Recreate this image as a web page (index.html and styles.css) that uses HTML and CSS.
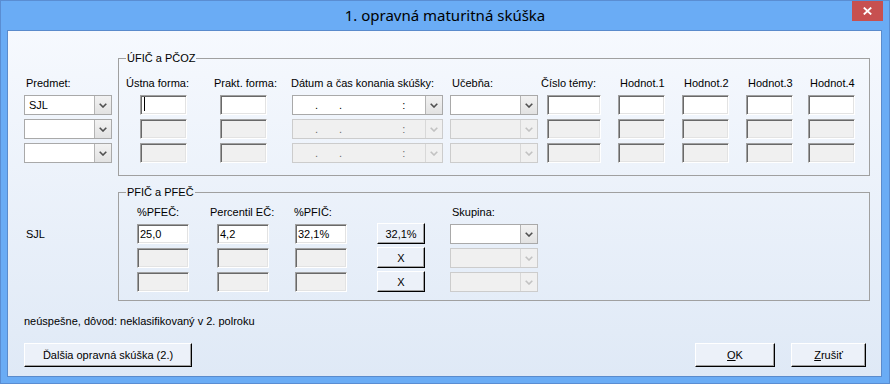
FILE: index.html
```html
<!DOCTYPE html>
<html lang="sk">
<head>
<meta charset="utf-8">
<title>1. opravná maturitná skúška</title>
<link rel="stylesheet" href="styles.css">
</head>
<body>
<div class="window">
  <div class="titlebar">
    <div class="tb-spacer"></div>
    <div class="title">1. opravná maturitná skúška</div>
    <div class="close"><svg width="9" height="8" viewBox="0 0 9 8"><path d="M0.8 0.6 L8.2 7.4 M8.2 0.6 L0.8 7.4" stroke="#fff" stroke-width="1.9" fill="none"/></svg></div>
  </div>
  <div class="client">
    <div class="section s1">
      <div class="leftcol lc1">
        <div class="lbl">Predmet:</div>
        <div class="stack">
          <div class="combo w88"><span class="val">SJL</span><span class="drop"><svg width="8" height="5" viewBox="0 0 8 5"><path d="M0.7 0.7 L4 4 L7.3 0.7" fill="none" stroke-width="1.6"/></svg></span></div>
          <div class="combo w88"><span class="val"></span><span class="drop"><svg width="8" height="5" viewBox="0 0 8 5"><path d="M0.7 0.7 L4 4 L7.3 0.7" fill="none" stroke-width="1.6"/></svg></span></div>
          <div class="combo w88"><span class="val"></span><span class="drop"><svg width="8" height="5" viewBox="0 0 8 5"><path d="M0.7 0.7 L4 4 L7.3 0.7" fill="none" stroke-width="1.6"/></svg></span></div>
        </div>
      </div>
      <fieldset class="group g1">
        <legend>ÚFIČ a PČOZ</legend>
        <div class="cols">
          <div class="col w-ustna">
            <div class="lbl">Ústna forma:</div>
            <div class="stack off14">
              <div class="tb w47"><span class="caret"></span></div>
              <div class="tb w47 dis"></div>
              <div class="tb w47 dis"></div>
            </div>
          </div>
          <div class="col w-prakt">
            <div class="lbl">Prakt. forma:</div>
            <div class="stack off6">
              <div class="tb w47"></div>
              <div class="tb w47 dis"></div>
              <div class="tb w47 dis"></div>
            </div>
          </div>
          <div class="col w-datum">
            <div class="lbl">Dátum a čas konania skúšky:</div>
            <div class="stack off1">
              <div class="combo w151"><span class="val dt"><span class="d1">.</span><span class="d2">.</span><span class="d3">:</span></span><span class="drop"><svg width="8" height="5" viewBox="0 0 8 5"><path d="M0.7 0.7 L4 4 L7.3 0.7" fill="none" stroke-width="1.6"/></svg></span></div>
              <div class="combo w151 dis"><span class="val dt"><span class="d1">.</span><span class="d2">.</span><span class="d3">:</span></span><span class="drop"><svg width="8" height="5" viewBox="0 0 8 5"><path d="M0.7 0.7 L4 4 L7.3 0.7" fill="none" stroke-width="1.6"/></svg></span></div>
              <div class="combo w151 dis"><span class="val dt"><span class="d1">.</span><span class="d2">.</span><span class="d3">:</span></span><span class="drop"><svg width="8" height="5" viewBox="0 0 8 5"><path d="M0.7 0.7 L4 4 L7.3 0.7" fill="none" stroke-width="1.6"/></svg></span></div>
            </div>
          </div>
          <div class="col w-ucebna">
            <div class="lbl loff2">Učebňa:</div>
            <div class="stack">
              <div class="combo w88"><span class="val"></span><span class="drop"><svg width="8" height="5" viewBox="0 0 8 5"><path d="M0.7 0.7 L4 4 L7.3 0.7" fill="none" stroke-width="1.6"/></svg></span></div>
              <div class="combo w88 dis"><span class="val"></span><span class="drop"><svg width="8" height="5" viewBox="0 0 8 5"><path d="M0.7 0.7 L4 4 L7.3 0.7" fill="none" stroke-width="1.6"/></svg></span></div>
              <div class="combo w88 dis"><span class="val"></span><span class="drop"><svg width="8" height="5" viewBox="0 0 8 5"><path d="M0.7 0.7 L4 4 L7.3 0.7" fill="none" stroke-width="1.6"/></svg></span></div>
            </div>
          </div>
          <div class="col w-cislo">
            <div class="lbl">Číslo témy:</div>
            <div class="stack off6">
              <div class="tb w54"></div>
              <div class="tb w54 dis"></div>
              <div class="tb w54 dis"></div>
            </div>
          </div>
          <div class="col w-h">
            <div class="lbl loff2">Hodnot.1</div>
            <div class="stack">
              <div class="tb w47"></div>
              <div class="tb w47 dis"></div>
              <div class="tb w47 dis"></div>
            </div>
          </div>
          <div class="col w-h">
            <div class="lbl loff2">Hodnot.2</div>
            <div class="stack">
              <div class="tb w47"></div>
              <div class="tb w47 dis"></div>
              <div class="tb w47 dis"></div>
            </div>
          </div>
          <div class="col w-h3">
            <div class="lbl loff2">Hodnot.3</div>
            <div class="stack">
              <div class="tb w47"></div>
              <div class="tb w47 dis"></div>
              <div class="tb w47 dis"></div>
            </div>
          </div>
          <div class="col w-h4">
            <div class="lbl loff2">Hodnot.4</div>
            <div class="stack">
              <div class="tb w47"></div>
              <div class="tb w47 dis"></div>
              <div class="tb w47 dis"></div>
            </div>
          </div>
        </div>
      </fieldset>
    </div>

    <div class="section s2">
      <div class="leftcol lc2">
        <div class="lbl">SJL</div>
      </div>
      <fieldset class="group g2">
        <legend>PFIČ a PFEČ</legend>
        <div class="cols">
          <div class="col w-pfec">
            <div class="lbl">%PFEČ:</div>
            <div class="stack">
              <div class="tb w52">25,0</div>
              <div class="tb w52 dis"></div>
              <div class="tb w52 dis"></div>
            </div>
          </div>
          <div class="col w-perc">
            <div class="lbl">Percentil EČ:</div>
            <div class="stack off7">
              <div class="tb w52">4,2</div>
              <div class="tb w52 dis"></div>
              <div class="tb w52 dis"></div>
            </div>
          </div>
          <div class="col w-pfic">
            <div class="lbl">%PFIČ:</div>
            <div class="stack off1">
              <div class="tb w52">32,1%</div>
              <div class="tb w52 dis"></div>
              <div class="tb w52 dis"></div>
            </div>
          </div>
          <div class="col w-btns">
            <div class="lbl"></div>
            <div class="stack btnstack">
              <button class="btn small">32,1%</button>
              <button class="btn small">X</button>
              <button class="btn small">X</button>
            </div>
          </div>
          <div class="col w-skup">
            <div class="lbl loff2">Skupina:</div>
            <div class="stack">
              <div class="combo w88"><span class="val"></span><span class="drop"><svg width="8" height="5" viewBox="0 0 8 5"><path d="M0.7 0.7 L4 4 L7.3 0.7" fill="none" stroke-width="1.6"/></svg></span></div>
              <div class="combo w88 dis"><span class="val"></span><span class="drop"><svg width="8" height="5" viewBox="0 0 8 5"><path d="M0.7 0.7 L4 4 L7.3 0.7" fill="none" stroke-width="1.6"/></svg></span></div>
              <div class="combo w88 dis"><span class="val"></span><span class="drop"><svg width="8" height="5" viewBox="0 0 8 5"><path d="M0.7 0.7 L4 4 L7.3 0.7" fill="none" stroke-width="1.6"/></svg></span></div>
            </div>
          </div>
        </div>
      </fieldset>
    </div>

    <div class="status">neúspešne, dôvod: neklasifikovaný v 2. polroku</div>

    <div class="btnrow">
      <button class="btn big">Ďalšia opravná skúška (2.)</button>
      <div class="btngroup">
        <button class="btn ok"><u>O</u>K</button>
        <button class="btn cancel"><u>Z</u>rušiť</button>
      </div>
    </div>
  </div>
</div>
</body>
</html>
```

FILE: styles.css
```css
* { box-sizing: border-box; }
html, body { margin: 0; padding: 0; }
body {
  width: 890px;
  height: 384px;
  overflow: hidden;
  font-family: "Liberation Sans", Arial, sans-serif;
  font-size: 11px;
  color: #000;
}
.window {
  width: 890px;
  height: 384px;
  background: #6aacf5;
  border: 1px solid #5a8dd2;
  display: flex;
  flex-direction: column;
}
.titlebar {
  height: 29px;
  flex: none;
  display: flex;
  align-items: flex-start;
  padding-right: 6px;
}
.tb-spacer { width: 37px; flex: none; }
.title {
  flex: 1;
  text-align: center;
  font-family: "Noto Sans", "Open Sans", sans-serif;
  font-size: 15px;
  line-height: 28px;
  color: #000;
}
.close {
  width: 31px;
  height: 20px;
  flex: none;
  background: #c75050;
  display: flex;
  align-items: center;
  justify-content: center;
}
.client {
  flex: 1;
  margin: 0 7px 6px 6px;
  border: 1px solid #5a8bcc;
  background: linear-gradient(#f6f9fe, #dfe9f6);
  padding: 21px 10px 0 16px;
  display: flex;
  flex-direction: column;
}
.section { display: flex; }
.s2 { margin-top: 10px; }
.leftcol { width: 94px; flex: none; }
.lc1 { padding-top: 25px; }
.lc1 .lbl { margin-left: 2px; }
.lc2 { padding-top: 42px; }
.lc2 .lbl { margin-left: 2px; }
.lbl {
  height: 13px;
  line-height: 13px;
  white-space: nowrap;
}
.loff2 { margin-left: 2px; }
.stack {
  display: flex;
  flex-direction: column;
  gap: 4px;
  margin-top: 5px;
}
.off1 { margin-left: 1px; }
.off6 { margin-left: 6px; }
.off7 { margin-left: 7px; }
.off14 { margin-left: 14px; }

fieldset.group {
  width: 752px;
  min-width: 0;
  margin: 0;
  padding: 0;
  border: 1px solid #a0a0a0;
}
legend {
  margin-left: 7px;
  padding: 0 1px;
  font-size: 11px;
  line-height: 13px;
}
.cols { display: flex; }
.g1 .cols { padding: 12px 0 12px 7px; }
.g2 .cols { padding: 7px 0 8px 18px; }
.col { flex: none; display: flex; flex-direction: column; }
.w-ustna { width: 88px; }
.w-prakt { width: 77px; }
.w-datum { width: 159px; }
.w-ucebna { width: 91px; }
.w-cislo { width: 77px; }
.w-h { width: 64px; }
.w-h3 { width: 62px; }
.w-h4 { width: 55px; }
.w-pfec { width: 73px; }
.w-perc { width: 84px; }
.w-pfic { width: 83px; }
.w-btns { width: 73px; }
.w-skup { width: 90px; }

.w47 { width: 47px; }
.w52 { width: 52px; }
.w54 { width: 54px; }
.w88 { width: 88px; }
.w151 { width: 151px; }

.tb {
  height: 20px;
  background: #fff;
  border: 1px solid;
  border-color: #a0a0a0 #fff #fff #a0a0a0;
  box-shadow: inset 1px 1px 0 #696969, inset -1px -1px 0 #e3e3e3;
  padding: 0 0 0 2px;
  line-height: 18px;
  white-space: nowrap;
}
.tb.dis { background: #f0f0f0; }
.caret {
  display: block;
  width: 1px;
  height: 14px;
  margin: 1px 0 0 1px;
  background: #000;
}

.combo {
  height: 20px;
  display: flex;
  background: #fff;
  border: 1px solid #a9a9a9;
}
.combo .val {
  flex: 1;
  padding-left: 4px;
  line-height: 18px;
  white-space: nowrap;
}
.combo .drop {
  width: 17px;
  flex: none;
  border-left: 1px solid #b4b4b4;
  background: linear-gradient(#f2f2f2, #e2e2e2);
  display: flex;
  align-items: center;
  justify-content: center;
}
.combo .drop svg { stroke: #505050; }
.combo.dis { background: #f0f0f0; border-color: #cccccc; }
.combo.dis .drop { background: #f0f0f0; border-left-color: #d8d8d8; }
.combo.dis .drop svg { stroke: #c2c2c2; }
.dt { display: flex; }
.dt .d1 { margin-left: 18px; }
.dt .d2 { margin-left: 21px; }
.dt .d3 { margin-left: 60px; }
.combo.dis .dt { color: #6d6d6d; }

.btn {
  font-family: "Liberation Sans", Arial, sans-serif;
  font-size: 11px;
  color: #000;
  background: #ecf1f9;
  border: 1px solid;
  border-color: #fff #000 #000 #fff;
  box-shadow: inset -1px -1px 0 #a0a0a0;
  padding: 0;
  margin: 0;
}
.btn u { text-decoration: underline; }
.btnstack { gap: 3px; margin-top: 4px; }
.small { width: 48px; height: 21px; }
.status {
  margin-top: 14px;
  height: 13px;
  line-height: 13px;
}
.btnrow {
  margin-top: 15px;
  display: flex;
  justify-content: space-between;
  padding-right: 5px;
}
.btngroup { display: flex; gap: 16px; }
.big { width: 168px; height: 24px; }
.ok { width: 80px; height: 24px; }
.cancel { width: 75px; height: 24px; }
```
